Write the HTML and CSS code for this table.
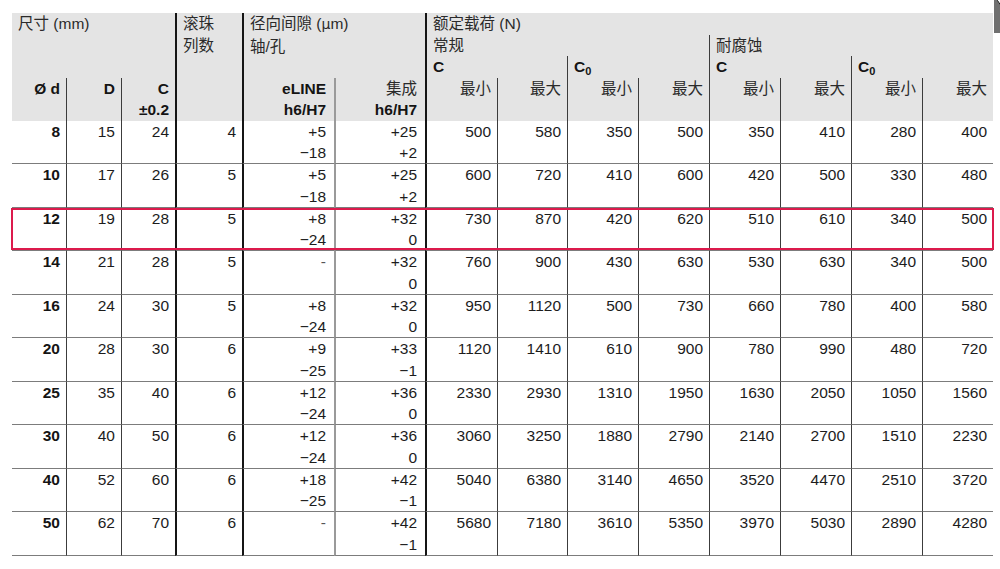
FILE: index.html
```html
<!DOCTYPE html>
<html lang="zh">
<head>
<meta charset="utf-8">
<title>尺寸表</title>
<link rel="stylesheet" href="styles.css">
</head>
<body>
<div class="corner"><div class="ring"></div></div>
<div class="wrap">
<table class="spec">
  <colgroup>
    <col class="w54"><col class="w55"><col class="w54"><col class="w67"><col class="w92"><col class="w91">
    <col class="w72"><col class="w70"><col class="w71"><col class="w71"><col class="w71"><col class="w71"><col class="w71"><col class="w71">
  </colgroup>
  <thead>
    <tr class="h">
      <th colspan="3" rowspan="3" class="tl">尺寸 (mm)</th>
      <th rowspan="5" class="tl bk">滚珠<br>列数</th>
      <th colspan="2" rowspan="3" class="tl bk">径向间隙 (<span class="mu">µ</span>m)<br>轴/孔</th>
      <th colspan="8" class="tl bk">额定载荷 (N)</th>
    </tr>
    <tr class="h">
      <th colspan="4" class="tl bk">常规</th>
      <th colspan="4" class="tl bt">耐腐蚀</th>
    </tr>
    <tr class="h">
      <th colspan="2" class="tl bk strong">C</th>
      <th colspan="2" class="tl bt strong">C<sub>0</sub></th>
      <th colspan="2" class="tl bt strong">C</th>
      <th colspan="2" class="tl bt strong">C<sub>0</sub></th>
    </tr>
    <tr class="h">
      <th rowspan="2" class="strong">Ø d</th>
      <th rowspan="2" class="bt strong">D</th>
      <th rowspan="2" class="bt strong">C<br>±0.2</th>
      <th rowspan="2" class="bk strong cl">eLINE<br>h6/H7</th>
      <th rowspan="2" class="bg cl">集成<br><span class="strong">h6/H7</span></th>
      <th rowspan="2" class="bk">最小</th>
      <th rowspan="2" class="bt">最大</th>
      <th rowspan="2" class="bt">最小</th>
      <th rowspan="2" class="bt">最大</th>
      <th rowspan="2" class="bt">最小</th>
      <th rowspan="2" class="bt">最大</th>
      <th rowspan="2" class="bt">最小</th>
      <th rowspan="2" class="bt">最大</th>
    </tr>
    <tr class="h"></tr>
  </thead>
  <tbody>
    <tr><td class="strong">8</td><td class="bt">15</td><td class="bt">24</td><td class="bk">4</td><td class="bk cl">+5<br>−18</td><td class="bg cl">+25<br>+2</td><td class="bk">500</td><td class="bt">580</td><td class="bt">350</td><td class="bt">500</td><td class="bt">350</td><td class="bt">410</td><td class="bt">280</td><td class="bt">400</td></tr>
    <tr><td class="strong">10</td><td class="bt">17</td><td class="bt">26</td><td class="bk">5</td><td class="bk cl">+5<br>−18</td><td class="bg cl">+25<br>+2</td><td class="bk">600</td><td class="bt">720</td><td class="bt">410</td><td class="bt">600</td><td class="bt">420</td><td class="bt">500</td><td class="bt">330</td><td class="bt">480</td></tr>
    <tr><td class="strong">12</td><td class="bt">19</td><td class="bt">28</td><td class="bk">5</td><td class="bk cl">+8<br>−24</td><td class="bg cl">+32<br>0</td><td class="bk">730</td><td class="bt">870</td><td class="bt">420</td><td class="bt">620</td><td class="bt">510</td><td class="bt">610</td><td class="bt">340</td><td class="bt">500</td></tr>
    <tr><td class="strong">14</td><td class="bt">21</td><td class="bt">28</td><td class="bk">5</td><td class="bk cl"><span class="dash">-</span></td><td class="bg cl">+32<br>0</td><td class="bk">760</td><td class="bt">900</td><td class="bt">430</td><td class="bt">630</td><td class="bt">530</td><td class="bt">630</td><td class="bt">340</td><td class="bt">500</td></tr>
    <tr><td class="strong">16</td><td class="bt">24</td><td class="bt">30</td><td class="bk">5</td><td class="bk cl">+8<br>−24</td><td class="bg cl">+32<br>0</td><td class="bk">950</td><td class="bt">1120</td><td class="bt">500</td><td class="bt">730</td><td class="bt">660</td><td class="bt">780</td><td class="bt">400</td><td class="bt">580</td></tr>
    <tr><td class="strong">20</td><td class="bt">28</td><td class="bt">30</td><td class="bk">6</td><td class="bk cl">+9<br>−25</td><td class="bg cl">+33<br>−1</td><td class="bk">1120</td><td class="bt">1410</td><td class="bt">610</td><td class="bt">900</td><td class="bt">780</td><td class="bt">990</td><td class="bt">480</td><td class="bt">720</td></tr>
    <tr><td class="strong">25</td><td class="bt">35</td><td class="bt">40</td><td class="bk">6</td><td class="bk cl">+12<br>−24</td><td class="bg cl">+36<br>0</td><td class="bk">2330</td><td class="bt">2930</td><td class="bt">1310</td><td class="bt">1950</td><td class="bt">1630</td><td class="bt">2050</td><td class="bt">1050</td><td class="bt">1560</td></tr>
    <tr><td class="strong">30</td><td class="bt">40</td><td class="bt">50</td><td class="bk">6</td><td class="bk cl">+12<br>−24</td><td class="bg cl">+36<br>0</td><td class="bk">3060</td><td class="bt">3250</td><td class="bt">1880</td><td class="bt">2790</td><td class="bt">2140</td><td class="bt">2700</td><td class="bt">1510</td><td class="bt">2230</td></tr>
    <tr><td class="strong">40</td><td class="bt">52</td><td class="bt">60</td><td class="bk">6</td><td class="bk cl">+18<br>−25</td><td class="bg cl">+42<br>−1</td><td class="bk">5040</td><td class="bt">6380</td><td class="bt">3140</td><td class="bt">4650</td><td class="bt">3520</td><td class="bt">4470</td><td class="bt">2510</td><td class="bt">3720</td></tr>
    <tr><td class="strong">50</td><td class="bt">62</td><td class="bt">70</td><td class="bk">6</td><td class="bk cl"><span class="dash">-</span></td><td class="bg cl">+42<br>−1</td><td class="bk">5680</td><td class="bt">7180</td><td class="bt">3610</td><td class="bt">5350</td><td class="bt">3970</td><td class="bt">5030</td><td class="bt">2890</td><td class="bt">4280</td></tr>
  </tbody>
</table>
<div class="highlight"></div>
</div>
</body>
</html>
```

FILE: styles.css
```css
html, body {
  margin: 0;
  padding: 0;
  background: #ffffff;
}

body {
  font-family: "Liberation Sans", "Noto Sans CJK SC", sans-serif;
  font-size: 15.5px;
  color: #1c1c1c;
  padding: 13px 0 0 12px;
}

.wrap {
  position: relative;
  width: 981px;
}

.spec {
  table-layout: fixed;
  width: 981px;
  border-collapse: separate;
  border-spacing: 0;
}

.w54 { width: 54px; }
.w55 { width: 55px; }
.w67 { width: 67px; }
.w70 { width: 70px; }
.w71 { width: 71px; }
.w72 { width: 72px; }
.w91 { width: 91px; }
.w92 { width: 92px; }

.spec th,
.spec td {
  padding: 0 6px 0 0;
  text-align: right;
  vertical-align: top;
  white-space: nowrap;
  box-sizing: border-box;
}

.spec thead th {
  background: #e4e4e4;
  font-weight: normal;
  line-height: 21.6px;
  color: #2a2a2a;
}

.spec tr.h {
  height: 21.6px;
}

.spec th.tl {
  text-align: left;
  padding: 0 0 0 6px;
}

.spec td {
  line-height: 21.25px;
  height: 43.5px;
  border-bottom: 1px solid #7c7c7c;
}

.spec .cl {
  padding-right: 8px;
}

.strong {
  font-weight: bold;
  color: #141414;
}

.spec thead th.strong,
.spec thead .strong {
  font-weight: bold;
  color: #141414;
}

sub {
  font-size: 11px;
  vertical-align: -3px;
  line-height: 0;
}

.bk { border-left: 2px solid #151515; }
.bg { border-left: 2px solid #9a9a9a; }
.bt { border-left: 1px solid #3c3c3c; }

.dash {
  color: #555555;
}

.mu {
  font-family: "DejaVu Sans", sans-serif;
  font-size: 14px;
}

.highlight {
  position: absolute;
  left: -1px;
  right: -1px;
  top: 195px;
  height: 42px;
  border: 2px solid #dc1a4c;
  box-sizing: border-box;
  pointer-events: none;
}

.corner {
  position: absolute;
  top: 0;
  right: 0;
  width: 6px;
  height: 33px;
  background: #707070;
  overflow: hidden;
}

.ring {
  position: absolute;
  left: 2px;
  top: -20px;
  width: 28px;
  height: 28px;
  border: 1.5px solid #1a1a1a;
  border-radius: 50%;
  background: #ffffff;
}
```
